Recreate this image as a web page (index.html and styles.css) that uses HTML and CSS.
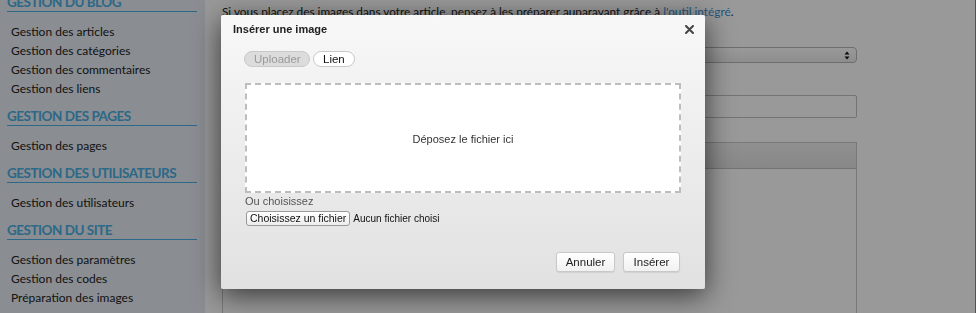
FILE: index.html
```html
<!DOCTYPE html>
<html lang="fr">
<head>
    <meta charset="UTF-8">
    <title>Administration - Articles</title>
    <link rel="stylesheet" href="styles.css">
</head>
<body>
    <div class="page">
        <aside class="sidebar">
            <h3>Gestion du blog</h3>
            <ul>
                <li><a href="#">Gestion des articles</a></li>
                <li><a href="#">Gestion des catégories</a></li>
                <li><a href="#">Gestion des commentaires</a></li>
                <li><a href="#">Gestion des liens</a></li>
            </ul>
            <h3>Gestion des pages</h3>
            <ul>
                <li><a href="#">Gestion des pages</a></li>
            </ul>
            <h3>Gestion des utilisateurs</h3>
            <ul>
                <li><a href="#">Gestion des utilisateurs</a></li>
            </ul>
            <h3>Gestion du site</h3>
            <ul>
                <li><a href="#">Gestion des paramètres</a></li>
                <li><a href="#">Gestion des codes</a></li>
                <li><a href="#">Préparation des images</a></li>
            </ul>
        </aside>

        <main class="content">
            <p class="intro">Si vous placez des images dans votre article, pensez à les préparer auparavant grâce à <a href="#">l'outil intégré</a>.</p>
            <label class="label">Catégorie</label>
            <div class="select">
                <svg width="6" height="9" viewBox="0 0 6 9"><path d="M3 0.5 L5.5 3.5 L0.5 3.5 Z M0.5 5.5 L5.5 5.5 L3 8.5 Z" fill="#111"/></svg>
            </div>
            <label class="label">Titre</label>
            <div class="input"></div>
            <div class="editor">
                <div class="editor-bar"></div>
                <div class="editor-body"></div>
            </div>
        </main>
    </div>

    <div class="overlay"></div>

    <div class="modal">
        <div class="modal-head">
            <span class="modal-title">Insérer une image</span>
            <svg class="modal-close" width="9" height="9" viewBox="0 0 9 9"><path d="M1 1 L8 8 M8 1 L1 8" stroke="#444" stroke-width="2" stroke-linecap="round"/></svg>
        </div>
        <div class="modal-body">
            <div class="tabs">
                <span class="tab active">Uploader</span>
                <span class="tab">Lien</span>
            </div>
            <div class="dropzone">Déposez le fichier ici</div>
            <div class="or">Ou choisissez</div>
            <div class="file">
                <span class="file-btn">Choisissez un fichier</span>
                <span class="file-name">Aucun fichier choisi</span>
            </div>
        </div>
        <div class="modal-foot">
            <button type="button">Annuler</button>
            <button type="button">Insérer</button>
        </div>
    </div>
</body>
</html>
```

FILE: styles.css
```css
body {
    margin: 0;
    background: #fff;
    font-family: Lato, "DejaVu Sans", sans-serif;
    font-size: 12px;
    color: #222;
    overflow: hidden;
}
.page {
    display: grid;
    grid-template-columns: 205px 652px;
    width: 975px;
    height: 313px;
    overflow: hidden;
    border-right: 1px solid #c4745a;
}
.sidebar {
    background: #e6ecf3;
    padding: 0 8px 0 7px;
}
.sidebar h3 {
    margin: -6px 0 0;
    font-size: 13.5px;
    letter-spacing: -0.5px;
    line-height: 17px;
    text-transform: uppercase;
    color: #4aaee2;
    border-bottom: 1px solid #4aaee2;
}
.sidebar ul {
    list-style: none;
    margin: 10px 0 10px;
    padding: 0 0 0 4px;
}
.sidebar ul + h3 {
    margin-top: 0;
}
.sidebar li {
    line-height: 19px;
}
.sidebar a {
    color: #222;
    text-decoration: none;
}
.content {
    padding: 0 0 0 17px;
}
.intro {
    margin: 3px 0 0;
    line-height: 18px;
    font-size: 11.8px;
}
.intro a {
    color: #3a8fd4;
    text-decoration: none;
}
.label {
    display: block;
    line-height: 18px;
    margin-top: 8px;
}
.select {
    display: flex;
    justify-content: flex-end;
    align-items: center;
    height: 14px;
    border: 1px solid #b8b8b8;
    border-radius: 4px;
    background: linear-gradient(#fff, #ececec);
    padding-right: 6px;
}
.select + .label {
    margin-top: 14px;
}
.input {
    height: 21px;
    border: 1px solid #c2c2c2;
    border-radius: 2px;
    background: #fff;
}
.editor {
    margin-top: 24px;
    height: 175px;
    border: 1px solid #c8c8c8;
}
.editor-bar {
    height: 25px;
    border-bottom: 1px solid #c0c0c0;
    background: linear-gradient(#f0f0f0, #e2e2e2);
}
.overlay {
    position: fixed;
    inset: 0;
    background: rgba(0, 0, 0, 0.4);
}
.modal {
    position: absolute;
    left: 221px;
    top: 15px;
    width: 484px;
    height: 274px;
    box-sizing: border-box;
    background: linear-gradient(#f8f8f8, #e1e1e1);
    border-radius: 2px;
    box-shadow: 0 6px 28px rgba(0, 0, 0, 0.65);
    font-family: "Liberation Sans", Arial, sans-serif;
    font-size: 11px;
    color: #222;
}
.modal-head {
    display: flex;
    justify-content: space-between;
    align-items: center;
    height: 28px;
    padding: 0 11px 0 12px;
}
.modal-title {
    font-weight: bold;
    font-size: 11px;
}
.modal-body {
    padding: 8px 24px 0 23px;
}
.tabs {
    display: flex;
    gap: 3px;
}
.tab {
    height: 14px;
    line-height: 14px;
    padding: 0 9px;
    border: 1px solid #c9c9c9;
    border-radius: 8px;
    background: #fff;
    font-size: 11.5px;
    color: #111;
}
.tab.active {
    width: 46px;
    padding: 0 9px;
    text-align: center;
    background: #dcdcdc;
    color: #999;
}
.dropzone {
    margin: 16px 0 0 1px;
    height: 104px;
    border: 2px dashed #bdbdbd;
    background: #fff;
    display: flex;
    align-items: center;
    justify-content: center;
    padding-top: 2px;
    box-sizing: content-box;
    color: #333;
}
.or {
    margin: 1px 0 0 1px;
    line-height: 14px;
    color: #555;
    font-size: 11px;
}
.file {
    display: flex;
    align-items: center;
    gap: 3px;
    margin: 3px 0 0 2px;
}
.file-btn {
    height: 13px;
    line-height: 13px;
    padding: 0 3px;
    border: 1px solid #9a9a9a;
    border-radius: 3px;
    background: linear-gradient(#fff, #ededed);
    font-size: 10.5px;
    color: #111;
}
.file-name {
    font-size: 10px;
    color: #111;
}
.modal-foot {
    display: flex;
    justify-content: flex-end;
    gap: 8px;
    padding: 26px 25px 0 0;
}
.modal-foot button {
    height: 20px;
    padding: 0;
    width: 59px;
    border: 1px solid #c8c8c8;
    border-radius: 3px;
    background: linear-gradient(#fff, #f1f1f1);
    box-shadow: 0 1px 1px rgba(0, 0, 0, 0.08);
    font-family: "Liberation Sans", Arial, sans-serif;
    font-size: 11.5px;
    color: #222;
}
.modal-foot button + button {
    width: 57px;
}
```
